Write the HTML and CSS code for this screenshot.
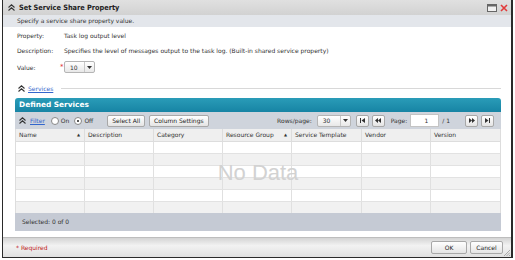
FILE: index.html
```html
<!DOCTYPE html>
<html>
<head>
<meta charset="utf-8">
<link rel="stylesheet" href="styles.css">
</head>
<body>
<div class="dialog">
  <div class="titlebar">
    <span class="chev chev-dark"><svg width="7" height="7" viewBox="0 0 7 7"><path d="M0.5 3.5 L3.5 0.8 L6.5 3.5 M0.5 6.5 L3.5 3.8 L6.5 6.5" fill="none" stroke="#333" stroke-width="1.1"/></svg></span>
    <span class="title">Set Service Share Property</span>
    <span class="winbtns">
      <svg width="10" height="8" viewBox="0 0 10 8"><rect x="0.5" y="0.5" width="9" height="7" fill="#f0f0f0" stroke="#666"/><rect x="1" y="1" width="8" height="1.5" fill="#666"/></svg>
      <svg width="8" height="8" viewBox="0 0 8 8"><path d="M1 1 L7 7 M7 1 L1 7" stroke="#e23a3a" stroke-width="1.6"/></svg>
    </span>
  </div>
  <div class="subtitle">Specify a service share property value.</div>
  <div class="content">
    <div class="props">
      <div class="prow"><span class="plabel">Property:</span><span>Task log output level</span></div>
      <div class="prow"><span class="plabel">Description:</span><span>Specifies the level of messages output to the task log. (Built-in shared service property)</span></div>
      <div class="prow prow-value"><span class="plabel">Value:</span><span class="req">*</span><span class="select sel-value"><span class="selval">10</span><span class="selarrow"><svg width="5" height="3" viewBox="0 0 5 3"><path d="M0 0 H5 L2.5 3 Z" fill="#333"/></svg></span></span></div>
    </div>
    <div class="section">
      <span class="chev"><svg width="7" height="7" viewBox="0 0 7 7"><path d="M0.5 3.5 L3.5 0.8 L6.5 3.5 M0.5 6.5 L3.5 3.8 L6.5 6.5" fill="none" stroke="#333" stroke-width="1.1"/></svg></span>
      <a class="link">Services</a>
      <span class="rule"></span>
    </div>
    <div class="panel">
      <div class="panelhead">Defined Services</div>
      <div class="toolbar">
        <span class="chev"><svg width="7" height="7" viewBox="0 0 7 7"><path d="M0.5 3.5 L3.5 0.8 L6.5 3.5 M0.5 6.5 L3.5 3.8 L6.5 6.5" fill="none" stroke="#333" stroke-width="1.1"/></svg></span>
        <a class="link">Filter</a>
        <span class="radio"></span><span class="rlabel">On</span>
        <span class="radio on"></span><span class="rlabel">Off</span>
        <span class="btn btn-sel">Select All</span>
        <span class="btn">Column Settings</span>
        <span class="spacer"></span>
        <span class="tlabel">Rows/page:</span>
        <span class="select sel-rows"><span class="selval">30</span><span class="selarrow"><svg width="5" height="3" viewBox="0 0 5 3"><path d="M0 0 H5 L2.5 3 Z" fill="#333"/></svg></span></span>
        <span class="btn nav"><svg width="5" height="5" viewBox="0 0 5 5"><rect x="0" y="0" width="1" height="5" fill="#333"/><path d="M5 0 V5 L1.5 2.5 Z" fill="#333"/></svg></span>
        <span class="btn nav"><svg width="6" height="5" viewBox="0 0 6 5"><path d="M3 0 V5 L0 2.5 Z M6 0 V5 L3 2.5 Z" fill="#333"/></svg></span>
        <span class="tlabel page">Page:</span>
        <span class="pageinput">1</span>
        <span class="tlabel">/ 1</span>
        <span class="btn nav nav-next"><svg width="6" height="5" viewBox="0 0 6 5"><path d="M0 0 V5 L3 2.5 Z M3 0 V5 L6 2.5 Z" fill="#333"/></svg></span>
        <span class="btn nav"><svg width="5" height="5" viewBox="0 0 5 5"><path d="M0 0 V5 L3.5 2.5 Z" fill="#333"/><rect x="4" y="0" width="1" height="5" fill="#333"/></svg></span>
      </div>
      <div class="grid">
        <div class="ghead">
          <div class="gcell">Name<span class="sort">▲</span></div>
          <div class="gcell">Description</div>
          <div class="gcell">Category</div>
          <div class="gcell">Resource Group<span class="sort">▲</span></div>
          <div class="gcell">Service Template</div>
          <div class="gcell">Vendor</div>
          <div class="gcell">Version</div>
        </div>
        <div class="gbody">
          <div class="grow"><div></div><div></div><div></div><div></div><div></div><div></div><div></div></div>
          <div class="grow alt"><div></div><div></div><div></div><div></div><div></div><div></div><div></div></div>
          <div class="grow"><div></div><div></div><div></div><div></div><div></div><div></div><div></div></div>
          <div class="grow alt"><div></div><div></div><div></div><div></div><div></div><div></div><div></div></div>
          <div class="grow"><div></div><div></div><div></div><div></div><div></div><div></div><div></div></div>
          <div class="grow alt short"><div></div><div></div><div></div><div></div><div></div><div></div><div></div></div>
          <div class="nodata">No Data</div>
        </div>
      </div>
      <div class="pfoot">Selected: 0 of 0</div>
    </div>
  </div>
  <div class="bottombar">
    <span class="required">* Required</span>
    <span class="btn dbtn ok">OK</span>
    <span class="btn dbtn cancel">Cancel</span>
    <span class="grip"><svg width="6" height="6" viewBox="0 0 6 6"><path d="M6 0 L0 6 M6 2.5 L2.5 6 M6 5 L5 6" stroke="#999" stroke-width="0.8"/></svg></span>
  </div>
</div>
</body>
</html>
```

FILE: styles.css
```css
* { box-sizing: border-box; }
html, body { margin: 0; padding: 0; background: #fff; }
body {
  font-family: "DejaVu Sans", Verdana, sans-serif;
  font-size: 6px;
  color: #333;
  width: 515px;
  height: 260px;
  overflow: hidden;
}
.dialog {
  margin-left: 2px;
  width: 511px;
  height: 258px;
  border: 1px solid #2a2a2a;
  border-right-width: 2px;
  border-top: none;
  display: flex;
  flex-direction: column;
}
.titlebar {
  height: 15px;
  background: linear-gradient(#e0e0e0, #d2d2d2);
  display: flex;
  align-items: center;
  padding: 0 3px 0 5px;
}
.chev { display: inline-flex; width: 8px; }
.title {
  font-family: "DejaVu Sans Condensed", "DejaVu Sans", sans-serif;
  font-weight: bold;
  font-size: 7.3px;
  color: #222;
  margin-left: 3px;
}
.winbtns { margin-left: auto; display: flex; gap: 3px; align-items: center; }
.subtitle {
  height: 12px;
  background: #e3e6eb;
  padding-left: 14px;
  line-height: 12px;
  color: #333;
}
.content { padding: 0 10px 0 12px; flex: 1; }
.props { padding: 0 0 0 2px; }
.prow { display: flex; height: 15px; align-items: center; }
.prow:first-child { margin-top: 1px; }
.prow-value { height: 18px; }
.plabel { width: 47px; }
.req { color: #e03030; width: 3px; margin-left: -4px; margin-right: 1px; font-size: 7px; }
.select {
  display: inline-flex;
  align-items: center;
  height: 12px;
  border: 1px solid #b5b5b5;
  border-radius: 2px;
  background: linear-gradient(#ffffff, #e8e8e8);
}
.sel-value { width: 31px; }
.selval { flex: 1; padding-left: 5px; }
.selarrow {
  border-left: 1px solid #c8c8c8;
  width: 10px;
  height: 10px;
  display: flex;
  align-items: center;
  justify-content: center;
}
.section {
  display: flex;
  align-items: center;
  height: 12px;
  margin-top: 6px;
  padding-left: 3px;
}
.link { color: #3366cc; text-decoration: underline; margin-left: 2px; }
.rule { flex: 1; height: 1px; background: #d8d8d8; margin-left: 8px; margin-right: 0; }
.panel { margin-top: 4px; }
.panelhead {
  height: 14px;
  background: linear-gradient(#2a9cb8, #1784a4);
  border-radius: 3px 3px 0 0;
  color: #fff;
  font-weight: bold;
  font-size: 7.4px;
  line-height: 14px;
  padding-left: 4px;
}
.toolbar {
  height: 17px;
  background: #cfd4dc;
  display: flex;
  align-items: center;
  padding: 0 7px 0 4px;
}
.toolbar .link { margin-left: 3px; margin-right: 6px; }
.radio {
  width: 8px; height: 8px;
  border: 1px solid #888;
  border-radius: 50%;
  background: #fff;
  position: relative;
  margin-right: 2px;
}
.radio.on::after {
  content: "";
  position: absolute;
  left: 2px; top: 2px;
  width: 2px; height: 2px;
  border-radius: 50%;
  background: #222;
}
.rlabel { margin-right: 5px; }
.btn {
  display: inline-flex;
  align-items: center;
  justify-content: center;
  height: 12px;
  padding: 0 4px;
  border: 1px solid #a8a8a8;
  border-radius: 2px;
  background: linear-gradient(#ffffff, #e4e4e4);
  color: #222;
  margin-left: 4px;
}
.btn-sel { margin-left: 9px; }
.spacer { flex: 1; }
.tlabel { margin-right: 5px; }
.tlabel.page { margin-left: 6px; margin-right: 3px; }
.sel-rows { width: 34px; margin-right: 2px; }
.nav { width: 13px; padding: 0; margin-left: 3px; }
.nav-next { margin-left: 10px; }
.pageinput {
  width: 29px; height: 13px;
  background: #fff;
  border: 1px solid #c4c4c4;
  text-align: right;
  padding-right: 10px;
  line-height: 11px;
  margin-right: 3px;
}
.grid { border-left: 1px solid #ddd; border-right: 1px solid #ddd; }
.ghead, .grow {
  display: grid;
  grid-template-columns: 69px 69px 69px 69px 70px 69px 1fr;
}
.ghead { height: 13px; background: #efefef; border-bottom: 1px solid #ddd; }
.gcell {
  border-right: 1px solid #ddd;
  line-height: 12px;
  padding-left: 3px;
  display: flex;
  align-items: center;
}
.gcell:last-child { border-right: none; }
.sort { margin-left: auto; margin-right: 4px; font-size: 4px; }
.gbody { position: relative; }
.grow { height: 12px; border-bottom: 1px solid #e2e2e2; background: #fff; }
.grow.alt { background: #f1f1f1; }
.grow.short { height: 11px; border-bottom: none; }
.grow > div { border-right: 1px solid #e0e0e0; }
.grow > div:last-child { border-right: none; }
.nodata {
  position: absolute;
  left: 0; right: 0; top: 18px;
  text-align: center;
  font-family: "Liberation Sans", Arial, sans-serif;
  font-size: 22px;
  color: #d2d2d2;
}
.pfoot {
  height: 18px;
  background: #c5cad4;
  line-height: 18px;
  padding-left: 7px;
}
.bottombar {
  height: 20px;
  background: linear-gradient(#d4d4d4, #f2f2f2 40%, #e0e0e0);
  border-top: 1px solid #bdbdbd;
  display: flex;
  align-items: center;
  padding: 0 1px 0 13px;
  position: relative;
}
.required { color: #c02020; flex: 1; }
.dbtn { height: 13px; margin-left: 3px; }
.ok { width: 36px; }
.cancel { width: 33px; }
.grip { display: inline-flex; align-self: flex-end; margin-left: 1px; margin-bottom: 1px; }
```
